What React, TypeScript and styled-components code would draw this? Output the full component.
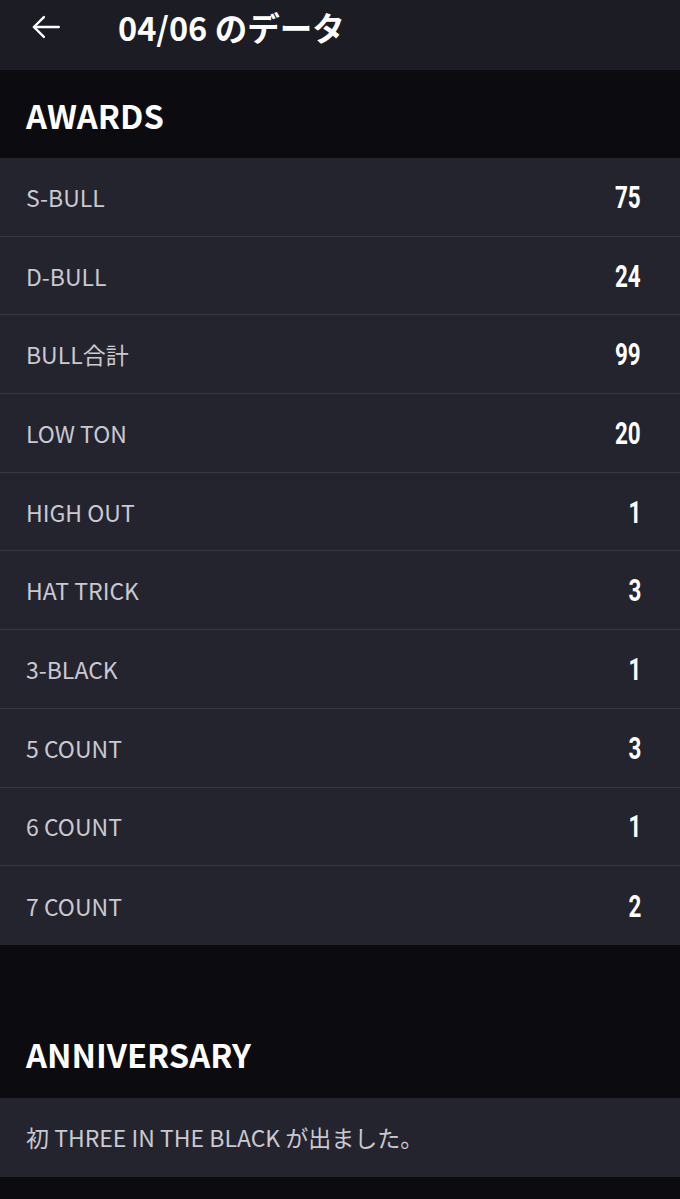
import styled, { createGlobalStyle } from 'styled-components';

const GlobalStyle = createGlobalStyle`
  html, body {
    margin: 0;
    padding: 0;
    background: #0c0c10;
    font-family: "Noto Sans CJK JP", "Noto Sans", sans-serif;
  }
`;

const Page = styled.div`
  display: flex;
  flex-direction: column;
  width: 680px;
  min-height: 1199px;
  background: #0c0c10;
`;

const TopBar = styled.header`
  display: flex;
  align-items: center;
  height: 70px;
  padding: 0 0 17px 28px;
  box-sizing: border-box;
  background: #1c1d24;
`;

const BackButton = styled.button`
  display: flex;
  align-items: center;
  justify-content: center;
  width: 36px;
  height: 36px;
  padding: 0;
  border: none;
  background: none;
  color: #ffffff;
  cursor: pointer;
`;

const Title = styled.h1`
  margin: 0 0 0 54px;
  font-size: 32.5px;
  font-weight: 700;
  color: #ffffff;
`;

const Section = styled.section<{ $gap?: number }>`
  display: flex;
  flex-direction: column;
  margin-top: ${(p) => p.$gap ?? 0}px;
`;

const SectionTitle = styled.h2`
  display: flex;
  align-items: center;
  height: 88px;
  margin: 0;
  padding: 0 26px;
  font-size: 32.7px;
  font-weight: 700;
  color: #ffffff;
  background: #0c0c10;
`;

const List = styled.ul`
  list-style: none;
  margin: 0;
  padding: 0;
  background: #24242e;
`;

const Row = styled.li`
  display: flex;
  align-items: center;
  justify-content: space-between;
  height: 78.7px;
  padding: 0 39px 0 26px;
  box-sizing: border-box;
  border-bottom: 1px solid #383842;

  &:last-child {
    border-bottom: none;
  }
`;

const Label = styled.span`
  font-size: 23px;
  color: #c9c9d1;
`;

const Value = styled.span`
  display: inline-block;
  font-family: Roboto, "Liberation Sans", sans-serif;
  font-size: 32px;
  font-weight: 700;
  color: #ffffff;
  transform: scaleX(0.7);
  transform-origin: right center;
`;

const awards: [string, number][] = [
  ['S-BULL', 75],
  ['D-BULL', 24],
  ['BULL合計', 99],
  ['LOW TON', 20],
  ['HIGH OUT', 1],
  ['HAT TRICK', 3],
  ['3-BLACK', 1],
  ['5 COUNT', 3],
  ['6 COUNT', 1],
  ['7 COUNT', 2],
];

const App = () => {
  return (
    <>
      <GlobalStyle />
      <Page>
        <TopBar>
          <BackButton aria-label="back">
            <svg width="34" height="34" viewBox="0 0 24 24" fill="none" stroke="currentColor" strokeWidth="1.7" strokeLinecap="round" strokeLinejoin="round">
              <path d="M21 12H3.5" />
              <path d="M10.5 5l-7 7 7 7" />
            </svg>
          </BackButton>
          <Title>04/06 のデータ</Title>
        </TopBar>

        <Section>
          <SectionTitle>AWARDS</SectionTitle>
          <List>
            {awards.map(([label, value]) => (
              <Row key={label}>
                <Label>{label}</Label>
                <Value>{value}</Value>
              </Row>
            ))}
          </List>
        </Section>

        <Section $gap={65}>
          <SectionTitle>ANNIVERSARY</SectionTitle>
          <List>
            <Row>
              <Label>初 THREE IN THE BLACK が出ました。</Label>
            </Row>
          </List>
        </Section>
      </Page>
    </>
  );
};

export default App;
